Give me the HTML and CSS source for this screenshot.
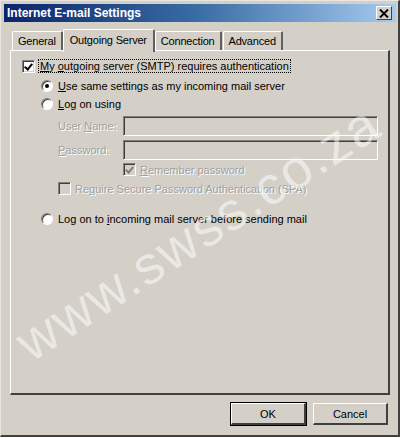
FILE: index.html
```html
<!DOCTYPE html>
<html>
<head>
<meta charset="utf-8">
<link rel="stylesheet" href="styles.css">
</head>
<body>
<div class="window">
  <div class="titlebar">
    <span class="title">Internet E-mail Settings</span>
    <span class="close"><svg width="10" height="9" viewBox="0 0 10 9"><path d="M1 0.5 L9 8.5 M9 0.5 L1 8.5" stroke="#000" stroke-width="2"/></svg></span>
  </div>
  <div class="tabs">
    <div class="tab">General</div>
    <div class="tab active">Outgoing Server</div>
    <div class="tab">Connection</div>
    <div class="tab">Advanced</div>
  </div>
  <div class="panel">
    <div class="row r1">
      <span class="check checked"></span>
      <span class="focus"><u>M</u>y <u>o</u>utgoing server (SMTP) requires authentication</span>
    </div>
    <div class="row r2">
      <span class="radio on"></span>
      <span><u>U</u>se same settings as my incoming mail server</span>
    </div>
    <div class="row r3">
      <span class="radio"></span>
      <span><u>L</u>og on using</span>
    </div>
    <div class="field f1">
      <span class="lbl dis">User <u>N</u>ame:</span>
      <span class="input"></span>
    </div>
    <div class="field f2">
      <span class="lbl dis"><u>P</u>assword:</span>
      <span class="input"></span>
    </div>
    <div class="row r4">
      <span class="check checked dimcheck"></span>
      <span class="dis"><u>R</u>emember password</span>
    </div>
    <div class="row r5">
      <span class="check dimcheck"></span>
      <span class="dis">Re<u>q</u>uire Secure Password Authentication (SPA)</span>
    </div>
    <div class="row r6">
      <span class="radio"></span>
      <span>Log on to <u>i</u>ncoming mail server before sending mail</span>
    </div>
  </div>
  <div class="buttons">
    <div class="btn default">OK</div>
    <div class="btn">Cancel</div>
  </div>
  <div class="watermark">www.swss.co.za</div>
</div>
</body>
</html>
```
FILE: styles.css
```css
html, body {
  margin: 0;
  padding: 0;
}
body {
  width: 400px;
  height: 438px;
  background: #fff;
  font-family: "Liberation Sans", Arial, sans-serif;
  font-size: 11px;
  color: #000;
  overflow: hidden;
}
.window {
  position: relative;
  box-sizing: border-box;
  width: 400px;
  height: 437px;
  background: #d4d0c8;
  border-top: 1px solid #e8e6e0;
  border-left: 1px solid #e8e6e0;
  border-right: 2px solid #404040;
  border-bottom: 2px solid #404040;
  padding: 3px 2px 0 3px;
  overflow: hidden;
}
.titlebar {
  height: 18px;
  background: linear-gradient(to right, #0a246a 0%, #3a6ea5 50%, #a6caf0 100%);
  display: flex;
  align-items: center;
  justify-content: space-between;
  padding: 0 4px 0 3px;
}
.title {
  color: #fff;
  font-weight: bold;
  font-size: 12px;
}
.close {
  width: 16px;
  height: 14px;
  box-sizing: border-box;
  background: #d4d0c8;
  border-top: 1px solid #fff;
  border-left: 1px solid #fff;
  border-right: 1px solid #404040;
  border-bottom: 1px solid #404040;
  display: flex;
  align-items: center;
  justify-content: center;
}
.tabs {
  display: flex;
  align-items: flex-end;
  height: 25px;
  margin-top: 3px;
  padding-left: 8px;
  position: relative;
  z-index: 2;
}
.tab {
  height: 19px;
  box-sizing: border-box;
  padding: 3px 5px 0 5px;
  border-top: 1px solid #fff;
  border-left: 1px solid #fff;
  border-right: 2px solid #606060;
  border-radius: 2px 2px 0 0;
  margin-right: 1px;
  letter-spacing: -0.2px;
}
.tab.active {
  height: 23px;
  margin-left: -1px;
  margin-right: 0;
  padding: 4px 6px 0 6px;
  background: #d4d0c8;
  margin-bottom: -2px;
}
.panel {
  position: relative;
  z-index: 1;
  box-sizing: border-box;
  margin-left: 6px;
  width: 380px;
  height: 345px;
  border-top: 1px solid #fff;
  border-left: 1px solid #fff;
  border-right: 2px solid #404040;
  border-bottom: 2px solid #404040;
  padding-top: 7px;
}
.row {
  display: flex;
  align-items: center;
  height: 16px;
  gap: 3px;
}
.r1 { padding-left: 11px; }
.r2 { padding-left: 30px; margin-top: 4px; }
.r3 { padding-left: 30px; margin-top: 2px; }
.r4 { padding-left: 112px; margin-top: 2px; height: 15px; }
.r5 { padding-left: 47px; margin-top: 4px; height: 15px; }
.r6 { padding-left: 30px; margin-top: 15px; }
.check {
  width: 13px;
  height: 13px;
  box-sizing: border-box;
  background: #fff;
  border-top: 1px solid #808080;
  border-left: 1px solid #808080;
  border-right: 1px solid #fff;
  border-bottom: 1px solid #fff;
  box-shadow: inset 1px 1px 0 #404040, inset -1px -1px 0 #d4d0c8;
  position: relative;
  margin-right: 1px;
}
.check.checked::after {
  content: "";
  position: absolute;
  left: 3px;
  top: 1px;
  width: 3px;
  height: 6px;
  border-right: 2px solid #000;
  border-bottom: 2px solid #000;
  transform: rotate(40deg);
}
.dimcheck { background: #d4d0c8; }
.dimcheck.checked::after { border-color: #808080; }
.radio {
  width: 12px;
  height: 12px;
  box-sizing: border-box;
  border-radius: 50%;
  background: #fff;
  border: 1px solid;
  border-color: #808080 #fff #fff #808080;
  box-shadow: inset 1px 1px 0 #404040;
  position: relative;
  margin-right: 2px;
}
.radio.on::after {
  content: "";
  position: absolute;
  left: 3px;
  top: 3px;
  width: 4px;
  height: 4px;
  border-radius: 50%;
  background: #000;
}
.focus {
  outline: 1px dotted #000;
  outline-offset: 0;
  padding: 0 1px;
}
.field {
  display: flex;
  align-items: center;
  height: 20px;
  padding-left: 47px;
}
.f1 { margin-top: 4px; }
.f2 { margin-top: 4px; }
.lbl {
  width: 65px;
}
.dis {
  color: #a0a0a0;
  text-shadow: 1px 1px 0 #fff;
}
.input {
  width: 255px;
  height: 20px;
  box-sizing: border-box;
  background: #d4d0c8;
  border-top: 1px solid #808080;
  border-left: 1px solid #808080;
  border-right: 1px solid #fff;
  border-bottom: 1px solid #fff;
  box-shadow: inset 1px 1px 0 #404040;
}
.buttons {
  display: flex;
  justify-content: flex-end;
  gap: 7px;
  padding-right: 8px;
  margin-top: 8px;
}
.btn {
  width: 75px;
  height: 22px;
  box-sizing: border-box;
  border-top: 1px solid #fff;
  border-left: 1px solid #fff;
  border-right: 2px solid #404040;
  border-bottom: 2px solid #404040;
  display: flex;
  align-items: center;
  justify-content: center;
}
.btn.default {
  outline: 1px solid #000;
}
.watermark {
  position: absolute;
  left: 20px;
  top: 316px;
  font-family: "Liberation Sans", sans-serif;
  font-size: 54px;
  line-height: 60px;
  color: rgba(255,255,255,0.5);
  transform: rotate(-33deg);
  transform-origin: left center;
  letter-spacing: 2px;
  white-space: nowrap;
  z-index: 5;
  pointer-events: none;
}
```
